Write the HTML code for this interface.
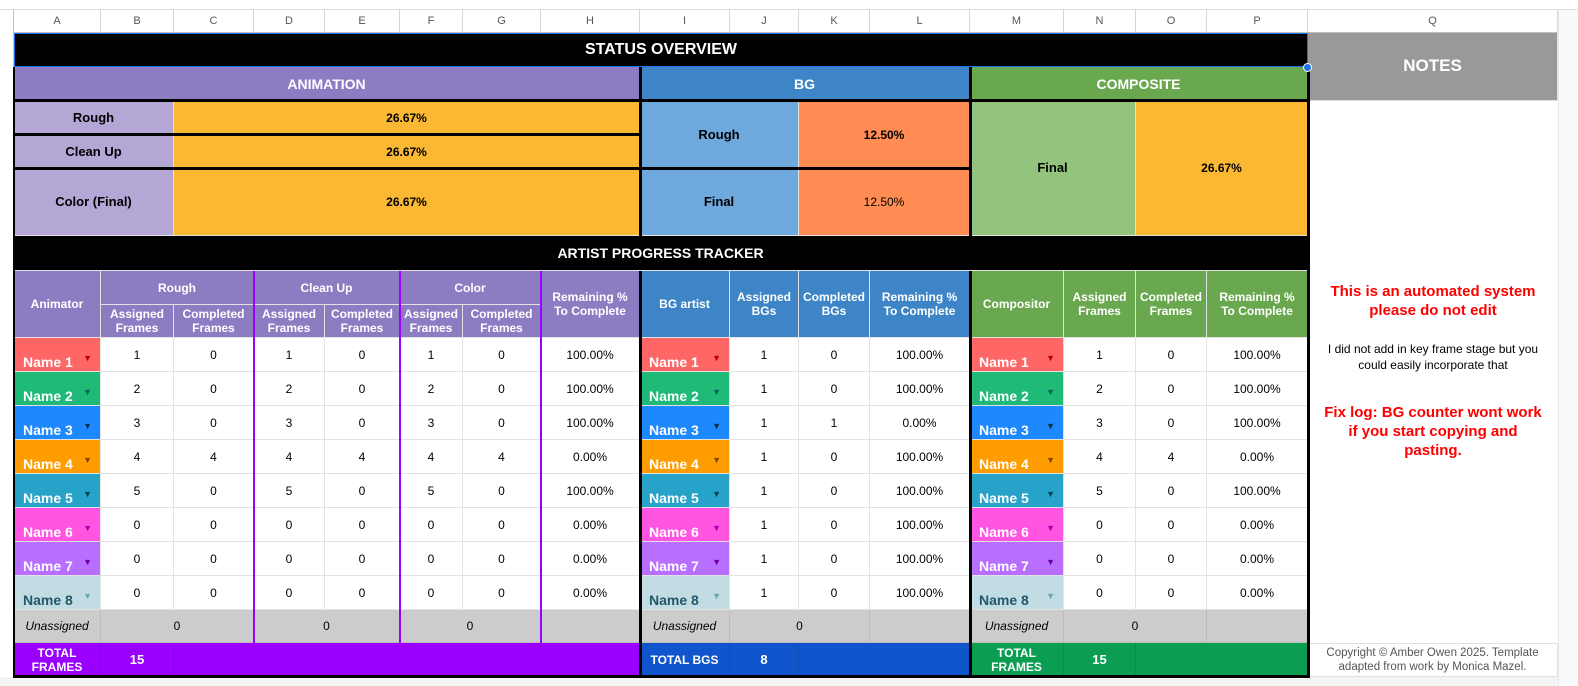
<!DOCTYPE html>
<html><head><meta charset="utf-8"><style>
body{margin:0;width:1578px;height:686px;background:#fff;position:relative;overflow:hidden;font-family:"Liberation Sans",Arial,sans-serif;}
.c{position:absolute;box-sizing:border-box;display:flex;align-items:center;justify-content:center;text-align:center;font-size:12px;color:#000;border-right:1px solid #e2e2e2;border-bottom:1px solid #e2e2e2;line-height:14px}
.b{font-weight:bold}
.w{color:#fff;font-weight:bold}
.h{position:absolute;font-size:11px;color:#555;top:10px;height:23px;display:flex;align-items:center;justify-content:center;border-right:1px solid #d6d6d6;box-sizing:border-box;border-bottom:1px solid #c0c0c0}
.k{position:absolute;background:#000}
.p{position:absolute;background:#9900ff;width:2px}
.n{justify-content:space-between;align-items:flex-end;padding:0 8px 2px 9px;font-weight:bold;font-size:14px;color:#fff}
.n span.t{font-size:9px;margin-bottom:4px}
</style></head><body>
<div style="position:absolute;left:0;top:0;width:1578px;height:10px;background:#fff;border-bottom:1px solid #ddd;box-sizing:border-box"></div>
<div style="position:absolute;left:0;top:10px;width:14px;height:667px;background:#fff;border-right:1px solid #c0c0c0;box-sizing:border-box"></div>
<div style="position:absolute;left:0;top:677px;width:1578px;height:9px;background:#f3f5f4"></div>
<div style="position:absolute;left:1558px;top:10px;width:20px;height:676px;background:#f8f9fa;border-left:1px solid #e8e8e8"></div>
<div class="h" style="left:14px;width:87px">A</div><div class="h" style="left:101px;width:73px">B</div><div class="h" style="left:174px;width:80px">C</div><div class="h" style="left:254px;width:71px">D</div><div class="h" style="left:325px;width:75px">E</div><div class="h" style="left:400px;width:63px">F</div><div class="h" style="left:463px;width:78px">G</div><div class="h" style="left:541px;width:99px">H</div><div class="h" style="left:640px;width:90px">I</div><div class="h" style="left:730px;width:69px">J</div><div class="h" style="left:799px;width:71px">K</div><div class="h" style="left:870px;width:100px">L</div><div class="h" style="left:970px;width:94px">M</div><div class="h" style="left:1064px;width:72px">N</div><div class="h" style="left:1136px;width:71px">O</div><div class="h" style="left:1207px;width:101px">P</div><div class="h" style="left:1308px;width:250px">Q</div>

<div class="c w" style="left:14px;top:33px;width:1294px;height:34px;background:#000;font-size:16px;border:1px solid #1a73e8">STATUS OVERVIEW</div>
<div class="c w" style="left:1308px;top:33px;width:250px;height:68px;background:#999;font-size:17px;padding-bottom:2px">NOTES</div>
<div class="c w" style="left:14px;top:67px;width:626px;height:34px;background:#8e7cc3;font-size:14px">ANIMATION</div>
<div class="c w" style="left:640px;top:67px;width:330px;height:34px;background:#3d85c6;font-size:14px">BG</div>
<div class="c w" style="left:970px;top:67px;width:338px;height:34px;background:#6aa84f;font-size:14px">COMPOSITE</div>

<div class="c b" style="left:14px;top:101px;width:160px;height:34px;background:#b4a7d6;font-size:13px">Rough</div>
<div class="c b" style="left:174px;top:101px;width:466px;height:34px;background:#fbb832">26.67%</div>
<div class="c b" style="left:14px;top:135px;width:160px;height:34px;background:#b4a7d6;font-size:13px">Clean Up</div>
<div class="c b" style="left:174px;top:135px;width:466px;height:34px;background:#fbb832">26.67%</div>
<div class="c b" style="left:14px;top:169px;width:160px;height:67px;background:#b4a7d6;font-size:13px">Color (Final)</div>
<div class="c b" style="left:174px;top:169px;width:466px;height:67px;background:#fbb832">26.67%</div>
<div class="c b" style="left:640px;top:101px;width:159px;height:68px;background:#6fa8dc;font-size:13px">Rough</div>
<div class="c b" style="left:799px;top:101px;width:171px;height:68px;background:#ff8c52">12.50%</div>
<div class="c b" style="left:640px;top:169px;width:159px;height:67px;background:#6fa8dc;font-size:13px">Final</div>
<div class="c" style="left:799px;top:169px;width:171px;height:67px;background:#ff8c52">12.50%</div>
<div class="c b" style="left:970px;top:101px;width:166px;height:135px;background:#93c47d;font-size:13px">Final</div>
<div class="c b" style="left:1136px;top:101px;width:172px;height:135px;background:#fbb832">26.67%</div>

<div class="c w" style="left:14px;top:236px;width:1294px;height:35px;background:#000;font-size:14px">ARTIST PROGRESS TRACKER</div>

<div class="c w" style="left:14px;top:271px;width:87px;height:67px;background:#8e7cc3">Animator</div>
<div class="c w" style="left:101px;top:271px;width:153px;height:34px;background:#8e7cc3">Rough</div>
<div class="c w" style="left:254px;top:271px;width:146px;height:34px;background:#8e7cc3">Clean Up</div>
<div class="c w" style="left:400px;top:271px;width:141px;height:34px;background:#8e7cc3">Color</div>
<div class="c w" style="left:541px;top:271px;width:99px;height:67px;background:#8e7cc3">Remaining %<br>To Complete</div>
<div class="c w" style="left:101px;top:305px;width:73px;height:33px;background:#8e7cc3">Assigned<br>Frames</div>
<div class="c w" style="left:174px;top:305px;width:80px;height:33px;background:#8e7cc3">Completed<br>Frames</div>
<div class="c w" style="left:254px;top:305px;width:71px;height:33px;background:#8e7cc3">Assigned<br>Frames</div>
<div class="c w" style="left:325px;top:305px;width:75px;height:33px;background:#8e7cc3">Completed<br>Frames</div>
<div class="c w" style="left:400px;top:305px;width:63px;height:33px;background:#8e7cc3">Assigned<br>Frames</div>
<div class="c w" style="left:463px;top:305px;width:78px;height:33px;background:#8e7cc3">Completed<br>Frames</div>

<div class="c w" style="left:640px;top:271px;width:90px;height:67px;background:#3d85c6">BG artist</div>
<div class="c w" style="left:730px;top:271px;width:69px;height:67px;background:#3d85c6">Assigned<br>BGs</div>
<div class="c w" style="left:799px;top:271px;width:71px;height:67px;background:#3d85c6">Completed<br>BGs</div>
<div class="c w" style="left:870px;top:271px;width:100px;height:67px;background:#3d85c6">Remaining %<br>To Complete</div>
<div class="c w" style="left:970px;top:271px;width:94px;height:67px;background:#6aa84f">Compositor</div>
<div class="c w" style="left:1064px;top:271px;width:72px;height:67px;background:#6aa84f">Assigned<br>Frames</div>
<div class="c w" style="left:1136px;top:271px;width:71px;height:67px;background:#6aa84f">Completed<br>Frames</div>
<div class="c w" style="left:1207px;top:271px;width:101px;height:67px;background:#6aa84f">Remaining %<br>To Complete</div>

<div class="c n" style="left:14px;top:338px;width:87px;height:34px;background:#ff6666">Name 1<span class="t" style="color:#b00">▼</span></div>
<div class="c" style="left:101px;top:338px;width:73px;height:34px">1</div><div class="c" style="left:174px;top:338px;width:80px;height:34px">0</div><div class="c" style="left:254px;top:338px;width:71px;height:34px">1</div><div class="c" style="left:325px;top:338px;width:75px;height:34px">0</div><div class="c" style="left:400px;top:338px;width:63px;height:34px">1</div><div class="c" style="left:463px;top:338px;width:78px;height:34px">0</div><div class="c" style="left:541px;top:338px;width:99px;height:34px">100.00%</div>
<div class="c n" style="left:640px;top:338px;width:90px;height:34px;background:#ff6666">Name 1<span class="t" style="color:#b00">▼</span></div>
<div class="c" style="left:730px;top:338px;width:69px;height:34px">1</div><div class="c" style="left:799px;top:338px;width:71px;height:34px">0</div><div class="c" style="left:870px;top:338px;width:100px;height:34px">100.00%</div>
<div class="c n" style="left:970px;top:338px;width:94px;height:34px;background:#ff6666">Name 1<span class="t" style="color:#b00">▼</span></div>
<div class="c" style="left:1064px;top:338px;width:72px;height:34px">1</div><div class="c" style="left:1136px;top:338px;width:71px;height:34px">0</div><div class="c" style="left:1207px;top:338px;width:101px;height:34px">100.00%</div>

<div class="c n" style="left:14px;top:372px;width:87px;height:34px;background:#1fb978">Name 2<span class="t" style="color:#065">▼</span></div>
<div class="c" style="left:101px;top:372px;width:73px;height:34px">2</div><div class="c" style="left:174px;top:372px;width:80px;height:34px">0</div><div class="c" style="left:254px;top:372px;width:71px;height:34px">2</div><div class="c" style="left:325px;top:372px;width:75px;height:34px">0</div><div class="c" style="left:400px;top:372px;width:63px;height:34px">2</div><div class="c" style="left:463px;top:372px;width:78px;height:34px">0</div><div class="c" style="left:541px;top:372px;width:99px;height:34px">100.00%</div>
<div class="c n" style="left:640px;top:372px;width:90px;height:34px;background:#1fb978">Name 2<span class="t" style="color:#065">▼</span></div>
<div class="c" style="left:730px;top:372px;width:69px;height:34px">1</div><div class="c" style="left:799px;top:372px;width:71px;height:34px">0</div><div class="c" style="left:870px;top:372px;width:100px;height:34px">100.00%</div>
<div class="c n" style="left:970px;top:372px;width:94px;height:34px;background:#1fb978">Name 2<span class="t" style="color:#065">▼</span></div>
<div class="c" style="left:1064px;top:372px;width:72px;height:34px">2</div><div class="c" style="left:1136px;top:372px;width:71px;height:34px">0</div><div class="c" style="left:1207px;top:372px;width:101px;height:34px">100.00%</div>

<div class="c n" style="left:14px;top:406px;width:87px;height:34px;background:#1e88fe">Name 3<span class="t" style="color:#034">▼</span></div>
<div class="c" style="left:101px;top:406px;width:73px;height:34px">3</div><div class="c" style="left:174px;top:406px;width:80px;height:34px">0</div><div class="c" style="left:254px;top:406px;width:71px;height:34px">3</div><div class="c" style="left:325px;top:406px;width:75px;height:34px">0</div><div class="c" style="left:400px;top:406px;width:63px;height:34px">3</div><div class="c" style="left:463px;top:406px;width:78px;height:34px">0</div><div class="c" style="left:541px;top:406px;width:99px;height:34px">100.00%</div>
<div class="c n" style="left:640px;top:406px;width:90px;height:34px;background:#1e88fe">Name 3<span class="t" style="color:#034">▼</span></div>
<div class="c" style="left:730px;top:406px;width:69px;height:34px">1</div><div class="c" style="left:799px;top:406px;width:71px;height:34px">1</div><div class="c" style="left:870px;top:406px;width:100px;height:34px">0.00%</div>
<div class="c n" style="left:970px;top:406px;width:94px;height:34px;background:#1e88fe">Name 3<span class="t" style="color:#034">▼</span></div>
<div class="c" style="left:1064px;top:406px;width:72px;height:34px">3</div><div class="c" style="left:1136px;top:406px;width:71px;height:34px">0</div><div class="c" style="left:1207px;top:406px;width:101px;height:34px">100.00%</div>

<div class="c n" style="left:14px;top:440px;width:87px;height:34px;background:#ff9d00">Name 4<span class="t" style="color:#840">▼</span></div>
<div class="c" style="left:101px;top:440px;width:73px;height:34px">4</div><div class="c" style="left:174px;top:440px;width:80px;height:34px">4</div><div class="c" style="left:254px;top:440px;width:71px;height:34px">4</div><div class="c" style="left:325px;top:440px;width:75px;height:34px">4</div><div class="c" style="left:400px;top:440px;width:63px;height:34px">4</div><div class="c" style="left:463px;top:440px;width:78px;height:34px">4</div><div class="c" style="left:541px;top:440px;width:99px;height:34px">0.00%</div>
<div class="c n" style="left:640px;top:440px;width:90px;height:34px;background:#ff9d00">Name 4<span class="t" style="color:#840">▼</span></div>
<div class="c" style="left:730px;top:440px;width:69px;height:34px">1</div><div class="c" style="left:799px;top:440px;width:71px;height:34px">0</div><div class="c" style="left:870px;top:440px;width:100px;height:34px">100.00%</div>
<div class="c n" style="left:970px;top:440px;width:94px;height:34px;background:#ff9d00">Name 4<span class="t" style="color:#840">▼</span></div>
<div class="c" style="left:1064px;top:440px;width:72px;height:34px">4</div><div class="c" style="left:1136px;top:440px;width:71px;height:34px">4</div><div class="c" style="left:1207px;top:440px;width:101px;height:34px">0.00%</div>

<div class="c n" style="left:14px;top:474px;width:87px;height:34px;background:#27a2c8">Name 5<span class="t" style="color:#045">▼</span></div>
<div class="c" style="left:101px;top:474px;width:73px;height:34px">5</div><div class="c" style="left:174px;top:474px;width:80px;height:34px">0</div><div class="c" style="left:254px;top:474px;width:71px;height:34px">5</div><div class="c" style="left:325px;top:474px;width:75px;height:34px">0</div><div class="c" style="left:400px;top:474px;width:63px;height:34px">5</div><div class="c" style="left:463px;top:474px;width:78px;height:34px">0</div><div class="c" style="left:541px;top:474px;width:99px;height:34px">100.00%</div>
<div class="c n" style="left:640px;top:474px;width:90px;height:34px;background:#27a2c8">Name 5<span class="t" style="color:#045">▼</span></div>
<div class="c" style="left:730px;top:474px;width:69px;height:34px">1</div><div class="c" style="left:799px;top:474px;width:71px;height:34px">0</div><div class="c" style="left:870px;top:474px;width:100px;height:34px">100.00%</div>
<div class="c n" style="left:970px;top:474px;width:94px;height:34px;background:#27a2c8">Name 5<span class="t" style="color:#045">▼</span></div>
<div class="c" style="left:1064px;top:474px;width:72px;height:34px">5</div><div class="c" style="left:1136px;top:474px;width:71px;height:34px">0</div><div class="c" style="left:1207px;top:474px;width:101px;height:34px">100.00%</div>

<div class="c n" style="left:14px;top:508px;width:87px;height:34px;background:#ff55e0">Name 6<span class="t" style="color:#a0a">▼</span></div>
<div class="c" style="left:101px;top:508px;width:73px;height:34px">0</div><div class="c" style="left:174px;top:508px;width:80px;height:34px">0</div><div class="c" style="left:254px;top:508px;width:71px;height:34px">0</div><div class="c" style="left:325px;top:508px;width:75px;height:34px">0</div><div class="c" style="left:400px;top:508px;width:63px;height:34px">0</div><div class="c" style="left:463px;top:508px;width:78px;height:34px">0</div><div class="c" style="left:541px;top:508px;width:99px;height:34px">0.00%</div>
<div class="c n" style="left:640px;top:508px;width:90px;height:34px;background:#ff55e0">Name 6<span class="t" style="color:#a0a">▼</span></div>
<div class="c" style="left:730px;top:508px;width:69px;height:34px">1</div><div class="c" style="left:799px;top:508px;width:71px;height:34px">0</div><div class="c" style="left:870px;top:508px;width:100px;height:34px">100.00%</div>
<div class="c n" style="left:970px;top:508px;width:94px;height:34px;background:#ff55e0">Name 6<span class="t" style="color:#a0a">▼</span></div>
<div class="c" style="left:1064px;top:508px;width:72px;height:34px">0</div><div class="c" style="left:1136px;top:508px;width:71px;height:34px">0</div><div class="c" style="left:1207px;top:508px;width:101px;height:34px">0.00%</div>

<div class="c n" style="left:14px;top:542px;width:87px;height:34px;background:#b86eff">Name 7<span class="t" style="color:#60a">▼</span></div>
<div class="c" style="left:101px;top:542px;width:73px;height:34px">0</div><div class="c" style="left:174px;top:542px;width:80px;height:34px">0</div><div class="c" style="left:254px;top:542px;width:71px;height:34px">0</div><div class="c" style="left:325px;top:542px;width:75px;height:34px">0</div><div class="c" style="left:400px;top:542px;width:63px;height:34px">0</div><div class="c" style="left:463px;top:542px;width:78px;height:34px">0</div><div class="c" style="left:541px;top:542px;width:99px;height:34px">0.00%</div>
<div class="c n" style="left:640px;top:542px;width:90px;height:34px;background:#b86eff">Name 7<span class="t" style="color:#60a">▼</span></div>
<div class="c" style="left:730px;top:542px;width:69px;height:34px">1</div><div class="c" style="left:799px;top:542px;width:71px;height:34px">0</div><div class="c" style="left:870px;top:542px;width:100px;height:34px">100.00%</div>
<div class="c n" style="left:970px;top:542px;width:94px;height:34px;background:#b86eff">Name 7<span class="t" style="color:#60a">▼</span></div>
<div class="c" style="left:1064px;top:542px;width:72px;height:34px">0</div><div class="c" style="left:1136px;top:542px;width:71px;height:34px">0</div><div class="c" style="left:1207px;top:542px;width:101px;height:34px">0.00%</div>

<div class="c n" style="left:14px;top:576px;width:87px;height:34px;background:#c2dce4;color:#22586a">Name 8<span class="t" style="color:#6aa">▼</span></div>
<div class="c" style="left:101px;top:576px;width:73px;height:34px">0</div><div class="c" style="left:174px;top:576px;width:80px;height:34px">0</div><div class="c" style="left:254px;top:576px;width:71px;height:34px">0</div><div class="c" style="left:325px;top:576px;width:75px;height:34px">0</div><div class="c" style="left:400px;top:576px;width:63px;height:34px">0</div><div class="c" style="left:463px;top:576px;width:78px;height:34px">0</div><div class="c" style="left:541px;top:576px;width:99px;height:34px">0.00%</div>
<div class="c n" style="left:640px;top:576px;width:90px;height:34px;background:#c2dce4;color:#22586a">Name 8<span class="t" style="color:#6aa">▼</span></div>
<div class="c" style="left:730px;top:576px;width:69px;height:34px">1</div><div class="c" style="left:799px;top:576px;width:71px;height:34px">0</div><div class="c" style="left:870px;top:576px;width:100px;height:34px">100.00%</div>
<div class="c n" style="left:970px;top:576px;width:94px;height:34px;background:#c2dce4;color:#22586a">Name 8<span class="t" style="color:#6aa">▼</span></div>
<div class="c" style="left:1064px;top:576px;width:72px;height:34px">0</div><div class="c" style="left:1136px;top:576px;width:71px;height:34px">0</div><div class="c" style="left:1207px;top:576px;width:101px;height:34px">0.00%</div>

<div class="c" style="left:14px;top:610px;width:87px;height:33px;background:#ccc;font-style:italic;border-color:#bbb">Unassigned</div>
<div class="c" style="left:101px;top:610px;width:153px;height:33px;background:#ccc;border-color:#bbb">0</div>
<div class="c" style="left:254px;top:610px;width:146px;height:33px;background:#ccc;border-color:#bbb">0</div>
<div class="c" style="left:400px;top:610px;width:141px;height:33px;background:#ccc;border-color:#bbb">0</div>
<div class="c" style="left:541px;top:610px;width:99px;height:33px;background:#ccc;border-color:#bbb"></div>
<div class="c" style="left:640px;top:610px;width:90px;height:33px;background:#ccc;font-style:italic;border-color:#bbb">Unassigned</div>
<div class="c" style="left:730px;top:610px;width:140px;height:33px;background:#ccc;border-color:#bbb">0</div>
<div class="c" style="left:870px;top:610px;width:100px;height:33px;background:#ccc;border-color:#bbb"></div>
<div class="c" style="left:970px;top:610px;width:94px;height:33px;background:#ccc;font-style:italic;border-color:#bbb">Unassigned</div>
<div class="c" style="left:1064px;top:610px;width:143px;height:33px;background:#ccc;border-color:#bbb">0</div>
<div class="c" style="left:1207px;top:610px;width:101px;height:33px;background:#ccc;border-color:#bbb"></div>

<div class="c w" style="left:14px;top:643px;width:87px;height:34px;background:#9900ff;border-color:#8a00e6">TOTAL<br>FRAMES</div>
<div class="c w" style="left:101px;top:643px;width:73px;height:34px;background:#9900ff;border-color:#8a00e6;font-size:13px">15</div>
<div class="c" style="left:174px;top:643px;width:466px;height:34px;background:#9900ff;border-color:#8a00e6"></div>
<div class="c w" style="left:640px;top:643px;width:90px;height:34px;background:#1155cc;border-color:#0f4db8">TOTAL BGS</div>
<div class="c w" style="left:730px;top:643px;width:69px;height:34px;background:#1155cc;border-color:#0f4db8;font-size:13px">8</div>
<div class="c" style="left:799px;top:643px;width:171px;height:34px;background:#1155cc;border-color:#0f4db8"></div>
<div class="c w" style="left:970px;top:643px;width:94px;height:34px;background:#0b9d51;border-color:#0a8c48">TOTAL<br>FRAMES</div>
<div class="c w" style="left:1064px;top:643px;width:72px;height:34px;background:#0b9d51;border-color:#0a8c48;font-size:13px">15</div>
<div class="c" style="left:1136px;top:643px;width:172px;height:34px;background:#0b9d51;border-color:#0a8c48"></div>

<div class="c b" style="left:1308px;top:280px;width:250px;height:42px;color:#f00;font-size:15px;line-height:19px;border:none">This is an automated system<br>please do not edit</div>
<div class="c" style="left:1308px;top:340px;width:250px;height:34px;font-size:12px;line-height:16px;border:none">I did not add in key frame stage but you<br>could easily incorporate that</div>
<div class="c b" style="left:1308px;top:402px;width:250px;height:58px;color:#f00;font-size:15px;line-height:19px;border:none">Fix log: BG counter wont work<br>if you start copying and<br>pasting.</div>
<div class="c" style="left:1308px;top:643px;width:250px;height:34px;font-size:11.5px;color:#555;border-top:1px solid #e2e2e2;line-height:14px">Copyright © Amber Owen 2025. Template<br>adapted from work by Monica Mazel.</div>

<div class="k" style="left:13px;top:67px;width:2px;height:610px"></div>
<div class="k" style="left:1307px;top:67px;width:3px;height:610px"></div>
<div class="k" style="left:639px;top:67px;width:3px;height:169px"></div>
<div class="k" style="left:969px;top:67px;width:3px;height:169px"></div>
<div class="k" style="left:639px;top:271px;width:3px;height:406px"></div>
<div class="k" style="left:969px;top:271px;width:3px;height:406px"></div>
<div class="k" style="left:13px;top:99px;width:1297px;height:3px"></div>
<div class="k" style="left:13px;top:133px;width:628px;height:3px"></div>
<div class="k" style="left:13px;top:167px;width:958px;height:3px"></div>
<div class="k" style="left:13px;top:675px;width:1297px;height:3px"></div>
<div class="p" style="left:253px;top:271px;height:372px"></div>
<div class="p" style="left:399px;top:271px;height:372px"></div>
<div class="p" style="left:540px;top:271px;height:372px"></div>
<div style="position:absolute;left:1303px;top:63px;width:9px;height:9px;border-radius:50%;background:#1a73e8;border:1px solid #fff;box-sizing:border-box"></div>
</body></html>
